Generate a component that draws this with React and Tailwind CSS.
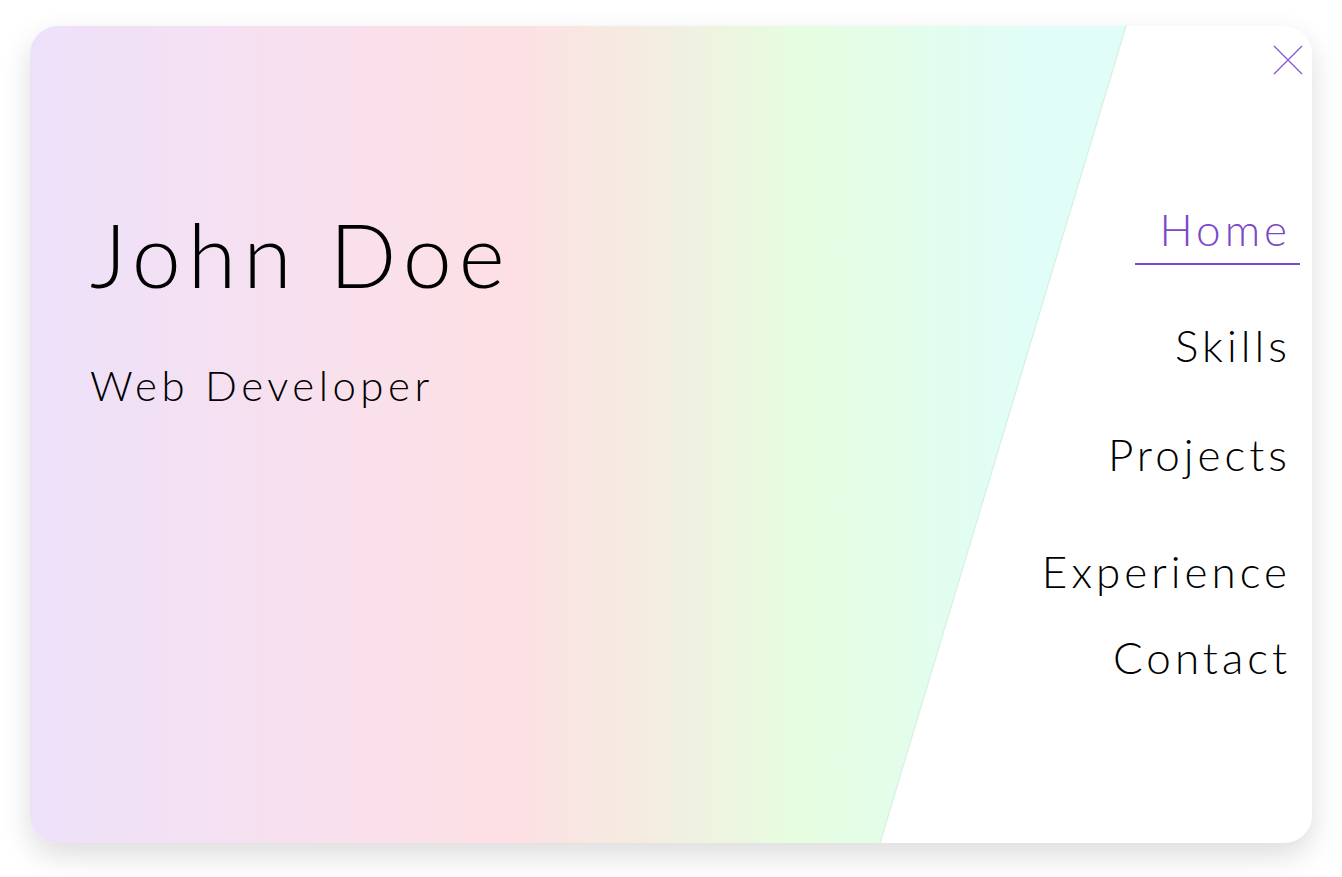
import React from "react";

const links = [
  { label: "Home", active: true, gap: "mt-[181px]" },
  { label: "Skills", gap: "mt-[58px]" },
  { label: "Projects", gap: "mt-[65px]" },
  { label: "Experience", gap: "mt-[73px]" },
  { label: "Contact", gap: "mt-[42px]" },
];

const App = () => {
  return (
    <div className="min-h-[877px] w-[1342px] bg-white pl-[30px] pt-[26px] font-['Lato',sans-serif] font-light text-black">
      <div className="relative flex h-[817px] w-[1282px] overflow-hidden rounded-[28px] bg-[linear-gradient(to_right,#ede1fa_0%,#f8e0ee_22%,#fde0e4_38%,#f4ece0_48%,#e6fde0_60%,#e0fdf8_78%,#e0fdf9_100%)] shadow-[0_12px_30px_rgba(0,0,0,0.14)]">
        {/* white slanted panel */}
        <div className="absolute inset-0 bg-white [clip-path:polygon(1096px_0,100%_0,100%_100%,850px_100%)]" aria-hidden />
        <svg className="absolute inset-0" width="1282" height="817" aria-hidden>
          <line x1="1096" y1="0" x2="850" y2="817" stroke="#d4f2de" strokeWidth="1.2" />
        </svg>

        <div className="relative flex-1 pl-[60px] pt-[184px]">
          <h1 className="text-[88px] leading-none tracking-[7px]">John Doe</h1>
          <p className="mt-[66px] text-[42px] leading-none tracking-[4.5px]">Web Developer</p>
        </div>

        <nav className="relative flex w-[300px] flex-col items-end pr-[12px]">
          {links.map((l) => (
            <a
              key={l.label}
              href="#"
              className={`${l.gap} text-[44px] leading-none tracking-[4px] ${
                l.active
                  ? "w-[165px] border-b-2 border-[#7b48c8] pb-[12px] pr-[9px] text-right text-[#7b48c8]"
                  : "pr-[9px]"
              }`}
            >
              {l.label}
            </a>
          ))}
        </nav>

        <button
          type="button"
          aria-label="Close menu"
          className="absolute right-[9px] top-[19px] h-[30px] w-[30px]"
        >
          <svg viewBox="0 0 30 30" width="30" height="30">
            <path d="M1 1L29 29M29 1L1 29" stroke="#8b5cd6" strokeWidth="1.4" fill="none" />
          </svg>
        </button>
      </div>
    </div>
  );
};

export default App;
